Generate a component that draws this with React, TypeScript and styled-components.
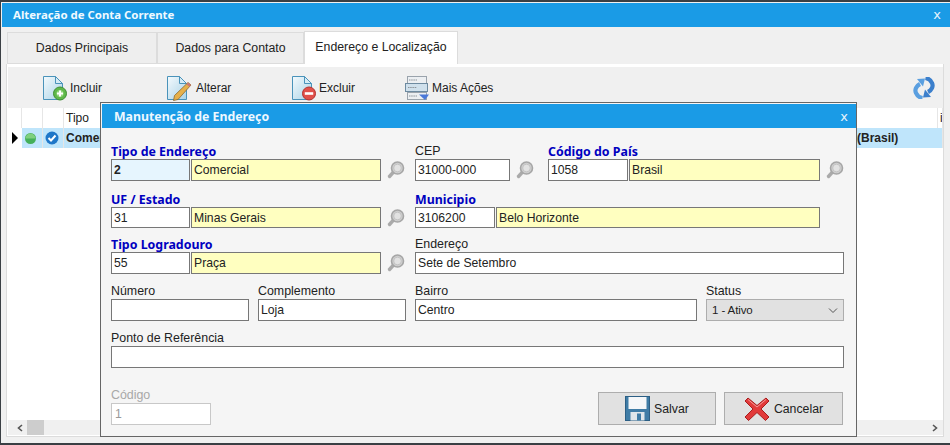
import React from "react";
import styled, { createGlobalStyle } from "styled-components";

const Global = createGlobalStyle`
  html, body { margin: 0; padding: 0; background: #f0f0f0; }
  * { box-sizing: border-box; }
  body { font-family: "Liberation Sans", Arial, sans-serif; }
`;

const Window = styled.div`
  position: relative; width: 950px; height: 445px; overflow: hidden;
  background: #f0f0f0; border-top: 2px solid #3a3f44; border-bottom: 2px solid #3a3f44; border-left: 1px solid #3a3f44;
  padding-top: 1px; display: flex; flex-direction: column;
`;
const TitleBar = styled.div`
  height: 24px; margin-left: 1px; background: #1a9be6; color: #f0f9ff; display: flex; align-items: center;
  justify-content: space-between; padding: 0 9px 2px 11px; flex: none;
`;
const TitleText = styled.span`
  font: bold 11.4px "Noto Sans", sans-serif;
`;
const Close = styled.span`
  font: 13px "DejaVu Sans", sans-serif; color: #e6f4fd; line-height: 1;
`;
const Tabs = styled.div`
  display: flex; height: 37px; padding: 4px 0 0 6px; align-items: flex-end; flex: none;
`;
const Tab = styled.div<{ $w: number; $active?: boolean }>`
  width: ${p => p.$w}px; height: ${p => (p.$active ? 33 : 32)}px; display: flex; align-items: center; justify-content: center;
  font-size: 12.3px; color: #222; background: ${p => (p.$active ? "#fff" : "#eeeeee")};
  border: 1px solid #dcdcdc; border-bottom: ${p => (p.$active ? "none" : "1px solid #dcdcdc")};
  padding-bottom: ${p => (p.$active ? 3 : 0)}px;
`;
const Panel = styled.div`
  margin: 0 6px 0 5px; width: 938px; height: 373px; background: #fff; border: 1px solid #dcdcdc; border-top: none;
  padding: 3px 0 0 1px; display: flex; flex-direction: column; flex: none;
`;
const Toolbar = styled.div`
  height: 41px; background: #f0f0f0; display: flex; align-items: center; position: relative; flex: none;
`;
const ToolButton = styled.div<{ $w: number; $gap?: number }>`
  width: ${p => p.$w}px; display: flex; align-items: center; gap: ${p => p.$gap ?? 1}px; font-size: 12px; color: #222; flex: none;
`;
const Spacer = styled.div`flex: 1;`;
const Refresh = styled.div`margin-right: 7px; display: flex; padding-top: 1px;`;
const HeadRow = styled.div`
  height: 20px; display: flex; font-size: 12px; color: #222; flex: none; background: #fff;
`;
const DataRow = styled(HeadRow)`
  background: #bfe5fb; font-weight: bold; height: 20px; margin-left: 14px;
`;
const Cell = styled.div<{ $w?: number; $grow?: boolean }>`
  width: ${p => (p.$w ? p.$w + "px" : "auto")}; flex: ${p => (p.$grow ? 1 : "none")};
  border-right: 1px solid #e6e6e6; display: flex; align-items: center; padding-left: 2px; overflow: hidden; white-space: nowrap;
`;
const SelRow = styled.div`display: flex; position: relative; flex: none;`;
const RowArrow = styled.div`
  position: absolute; left: 4px; top: 4px; width: 0; height: 0;
  border-top: 6px solid transparent; border-bottom: 6px solid transparent; border-left: 6px solid #000;
`;
const RowBody = styled.div`flex: 1; min-width: 0;`;
const Grid = styled.div`flex: 1;`;
const Scrollbar = styled.div`
  height: 15px; background: #f0f0f0; display: flex; align-items: center; justify-content: space-between; margin-bottom: 1px; flex: none;
  padding: 0 5px 0 9px;
`;
const Thumb = styled.div`width: 17px; height: 15px; background: #cdcdcd; margin-left: 4px;`;
const ScrollLeft = styled.div`display: flex; align-items: center;`;

const Modal = styled.div`
  position: absolute; left: 99px; top: 100px; width: 757px; height: 335px; background: #f5f5f5;
  border: 1px solid #666; padding-top: 1px; display: flex; flex-direction: column;
`;
const ModalBar = styled.div`
  height: 24px; margin: 0 0 0 1px; background: #1a9be6; color: #eef8ff; display: flex; align-items: center;
  justify-content: space-between; padding: 1px 8px 0 12px; flex: none;
`;
const ModalTitle = styled.span`font: bold 12.3px "Noto Sans", sans-serif;`;
const Form = styled.div`
  padding: 15px 0 0 10px; display: flex; flex-direction: column; gap: 9px; position: relative; flex: 1;
`;
const Row = styled.div<{ $mt?: number }>`display: flex; align-items: flex-end; height: 38px; margin-top: ${p => p.$mt ?? 0}px;`;
const Field = styled.div<{ $w: number; $mr?: number }>`
  width: ${p => p.$w}px; margin-right: ${p => p.$mr ?? 0}px; display: flex; flex-direction: column; flex: none;
`;
const Label = styled.label<{ $req?: boolean; $off?: boolean }>`
  height: 16px; white-space: nowrap;
  font: ${p => (p.$req ? 'bold 12.4px/17px "Noto Sans", sans-serif' : '12.4px/17px "Liberation Sans", sans-serif')};
  color: ${p => (p.$req ? "#0000c0" : p.$off ? "#a8a8a8" : "#222")};
`;
const Inputs = styled.div`display: flex; gap: 1px; align-items: center;`;
const Box = styled.div<{ $w: number; $h?: number; $bg?: string; $bold?: boolean; $off?: boolean }>`
  width: ${p => p.$w}px; height: ${p => p.$h ?? 22}px; background: ${p => p.$bg ?? "#fff"};
  border: 1px solid ${p => (p.$off ? "#c8c8c8" : "#777")};
  font-size: 12.2px; font-weight: ${p => (p.$bold ? "bold" : "normal")}; color: ${p => (p.$off ? "#999" : "#222")};
  padding: 0 ${p => (p.$off ? 3 : 2)}px; display: flex; align-items: center; flex: none;
`;
const LensWrap = styled.span`display: flex; margin-left: 5px;`;
const SelectBox = styled(Box)`
  background: #e1e1e1; border-color: #adadad; justify-content: space-between; padding: 0 5px 0 5px; font-size: 11.5px; letter-spacing: -0.1px;
`;
const Buttons = styled.div`
  position: absolute; right: 13px; bottom: 11px; display: flex; gap: 8px;
`;
const Btn = styled.div<{ $w: number }>`
  width: ${p => p.$w}px; height: 33px; background: #e1e1e1; border: 1px solid #adadad; display: flex; align-items: center;
  justify-content: center; gap: 4px; font-size: 12.3px; color: #222;
`;

const Page = ({ children }: { children?: React.ReactNode }) => (
  <svg width="26" height="26" viewBox="0 0 26 26">
    <defs>
      <linearGradient id="pg" x1="0" y1="0" x2="1" y2="1">
        <stop offset="0" stopColor="#f4fafd" />
        <stop offset="1" stopColor="#a9d2e6" />
      </linearGradient>
    </defs>
    <path d="M0.5 1.5H12.5L19.5 8.5V24.5H0.5Z" fill="url(#pg)" stroke="#4a93ba" strokeWidth="1" />
    <path d="M12.5 1.5V8.5H19.5Z" fill="#d5ebf5" stroke="#4a93ba" strokeWidth="1" />
    {children}
  </svg>
);
const Incluir = () => (
  <Page>
    <circle cx="17" cy="18.5" r="6.5" fill="#5fb84a" stroke="#3f8f32" />
    <circle cx="17" cy="18.5" r="3.6" fill="#8fd47a" />
    <path d="M17 15.5V21.5M14 18.5H20" stroke="#fff" strokeWidth="2" />
  </Page>
);
const Alterar = () => (
  <Page>
    <path d="M21 7.5L24 10L11 24.5L6.5 25.5L7.5 20.5Z" fill="#e6b04a" stroke="#8a6a30" strokeWidth="0.8" />
    <path d="M21 7.5L24 10L22.4 11.8L19.4 9.2Z" fill="#c77" />
  </Page>
);
const Excluir = () => (
  <Page>
    <circle cx="17" cy="18.5" r="6.5" fill="#e0504a" stroke="#b5302c" />
    <path d="M12.8 18.5H21.2" stroke="#fff" strokeWidth="2.6" />
  </Page>
);
const Mais = () => (
  <svg width="26" height="26" viewBox="0 0 26 26">
    <rect x="2.5" y="1.5" width="19" height="7" fill="#eceff2" stroke="#9aa3ac" />
    <rect x="0.5" y="8.5" width="22" height="8" fill="#cfe0ec" stroke="#6d8aa0" />
    <rect x="2.5" y="17.5" width="19" height="7" fill="#eceff2" stroke="#9aa3ac" />
    <path d="M4 5H12M3 12.5H12M4 21H12" stroke="#8d949a" strokeWidth="1" strokeDasharray="1.5 .7" />
    <path d="M14 19.5H24L20 25Z" fill="#4a78d8" />
  </svg>
);
const Arc = ({ color }: { color: string }) => (
  <g>
    <path d="M8 7C4 9 2.5 13 4 16C5 18.5 7.5 20.5 10.5 21" fill="none" stroke={color} strokeWidth="4.2" />
    <path d="M5 2L13 1.5L11 9.5Z" fill={color} />
  </g>
);
const RefreshIcon = () => (
  <svg width="24" height="22" viewBox="0 0 24 22">
    <Arc color="#5a9fe0" />
    <g transform="rotate(180 12 11)">
      <Arc color="#3b7fcc" />
    </g>
  </svg>
);
const Lens = () => (
  <svg width="18" height="18" viewBox="0 0 18 18">
    <path d="M2.5 15.5L6.5 11" stroke="#aaaaaa" strokeWidth="3.4" strokeLinecap="round" />
    <circle cx="10.5" cy="7" r="6" fill="#cfcfcf" stroke="#a6a6a6" strokeWidth="1.6" />
    <circle cx="10.5" cy="7" r="3.8" fill="#e2e2e2" stroke="#bdbdbd" strokeWidth=".8" />
  </svg>
);
const Status = () => (
  <svg width="13" height="13" viewBox="0 0 13 13">
    <circle cx="6.5" cy="6.5" r="5.5" fill="#45b05a" />
    <path d="M1.5 6.5A5 5 0 0 1 11.5 6.5Z" fill="#7fd07f" />
  </svg>
);
const Check = () => (
  <svg width="14" height="14" viewBox="0 0 14 14">
    <circle cx="7" cy="7" r="6.5" fill="#1f77c8" />
    <path d="M3.5 7L6 9.5L10.5 4.5" fill="none" stroke="#fff" strokeWidth="2" />
  </svg>
);
const Chevron = () => (
  <svg width="10" height="7" viewBox="0 0 10 7">
    <path d="M1 1.5L5 5.5L9 1.5" fill="none" stroke="#555" strokeWidth="1" />
  </svg>
);
const ScrollChevron = ({ right }: { right?: boolean }) => (
  <svg width="6" height="8" viewBox="0 0 6 8">
    <path d={right ? "M1 1L4.5 4L1 7" : "M5 1L1.5 4L5 7"} fill="none" stroke="#555" strokeWidth="1.6" />
  </svg>
);
const Floppy = () => (
  <svg width="25" height="25" viewBox="0 0 25 25">
    <rect x="0.5" y="0.5" width="24" height="24" fill="#3f7ca6" stroke="#2c5f85" />
    <rect x="3.5" y="1" width="18" height="12" fill="#f5f7f9" />
    <rect x="5.5" y="16" width="14" height="8.5" fill="#dfe6ea" />
    <rect x="12" y="17.5" width="4" height="7" fill="#3f7ca6" />
  </svg>
);
const RedX = () => (
  <svg width="26" height="24" viewBox="0 0 26 24">
    <path d="M4 1L13 8.5L22 1L25 4L17 12L25 20L21.5 23.5L13 15.5L4.5 23.5L1 20L9 12L1 4Z" fill="#e23a3a" stroke="#a81c1c" strokeWidth="1" />
    <path d="M4 2.5L13 10L22 2.5" fill="none" stroke="#f59a9a" strokeWidth="1" />
  </svg>
);

const YEL = "#ffffc0";

export default function App() {
  return (
    <Window>
      <Global />
      <TitleBar>
        <TitleText>Alteração de Conta Corrente</TitleText>
        <Close>x</Close>
      </TitleBar>
      <Tabs>
        <Tab $w={150}>Dados Principais</Tab>
        <Tab $w={147}>Dados para Contato</Tab>
        <Tab $w={154} $active>Endereço e Localização</Tab>
      </Tabs>
      <Panel>
        <Toolbar>
          <ToolButton $w={35} />
          <ToolButton $w={124}><Incluir />Incluir</ToolButton>
          <ToolButton $w={125} $gap={3}><Alterar />Alterar</ToolButton>
          <ToolButton $w={113}><Excluir />Excluir</ToolButton>
          <ToolButton $w={100}><Mais />Mais Ações</ToolButton>
          <Spacer />
          <Refresh><RefreshIcon /></Refresh>
        </Toolbar>
        <HeadRow>
          <Cell $w={14} />
          <Cell $w={21} />
          <Cell $w={21} />
          <Cell $grow>Tipo</Cell>
          <Cell $w={5}>i</Cell>
        </HeadRow>
        <SelRow>
          <RowArrow />
          <RowBody>
            <DataRow>
              <Cell $w={21}><Status /></Cell>
              <Cell $w={21}><Check /></Cell>
              <Cell $w={791}>Comercial</Cell>
              <Cell $grow>(Brasil)</Cell>
            </DataRow>
          </RowBody>
        </SelRow>
        <Grid />
        <Scrollbar>
          <ScrollLeft><ScrollChevron /><Thumb /></ScrollLeft>
          <ScrollChevron right />
        </Scrollbar>
      </Panel>
      <Modal>
        <ModalBar>
          <ModalTitle>Manutenção de Endereço</ModalTitle>
          <Close>x</Close>
        </ModalBar>
        <Form>
          <Row>
            <Field $w={304}>
              <Label $req>Tipo de Endereço</Label>
              <Inputs>
                <Box $w={79} $bg="#e6f5fe" $bold>2</Box>
                <Box $w={190} $bg={YEL}>Comercial</Box>
                <LensWrap><Lens /></LensWrap>
              </Inputs>
            </Field>
            <Field $w={133}>
              <Label>CEP</Label>
              <Inputs>
                <Box $w={95}>31000-000</Box>
                <LensWrap><Lens /></LensWrap>
              </Inputs>
            </Field>
            <Field $w={296}>
              <Label $req>Código do País</Label>
              <Inputs>
                <Box $w={80}>1058</Box>
                <Box $w={191} $bg={YEL}>Brasil</Box>
                <LensWrap><Lens /></LensWrap>
              </Inputs>
            </Field>
          </Row>
          <Row>
            <Field $w={304}>
              <Label $req>UF / Estado</Label>
              <Inputs>
                <Box $w={79} $h={21}>31</Box>
                <Box $w={190} $h={21} $bg={YEL}>Minas Gerais</Box>
                <LensWrap><Lens /></LensWrap>
              </Inputs>
            </Field>
            <Field $w={405}>
              <Label $req>Municipio</Label>
              <Inputs>
                <Box $w={80} $h={21}>3106200</Box>
                <Box $w={324} $h={21} $bg={YEL}>Belo Horizonte</Box>
              </Inputs>
            </Field>
          </Row>
          <Row $mt={-1}>
            <Field $w={304}>
              <Label $req>Tipo Logradouro</Label>
              <Inputs>
                <Box $w={79}>55</Box>
                <Box $w={190} $bg={YEL}>Praça</Box>
                <LensWrap><Lens /></LensWrap>
              </Inputs>
            </Field>
            <Field $w={429}>
              <Label>Endereço</Label>
              <Box $w={429}>Sete de Setembro</Box>
            </Field>
          </Row>
          <Row>
            <Field $w={138} $mr={9}>
              <Label>Número</Label>
              <Box $w={138} />
            </Field>
            <Field $w={148} $mr={9}>
              <Label>Complemento</Label>
              <Box $w={148}>Loja</Box>
            </Field>
            <Field $w={282} $mr={9}>
              <Label>Bairro</Label>
              <Box $w={282}>Centro</Box>
            </Field>
            <Field $w={138}>
              <Label>Status</Label>
              <SelectBox $w={138}>1 - Ativo<Chevron /></SelectBox>
            </Field>
          </Row>
          <Row>
            <Field $w={733}>
              <Label>Ponto de Referência</Label>
              <Box $w={733} />
            </Field>
          </Row>
          <Row $mt={10}>
            <Field $w={100}>
              <Label $off>Código</Label>
              <Box $w={100} $off>1</Box>
            </Field>
          </Row>
          <Buttons>
            <Btn $w={118}><Floppy />Salvar</Btn>
            <Btn $w={119}><RedX />Cancelar</Btn>
          </Buttons>
        </Form>
      </Modal>
    </Window>
  );
}
